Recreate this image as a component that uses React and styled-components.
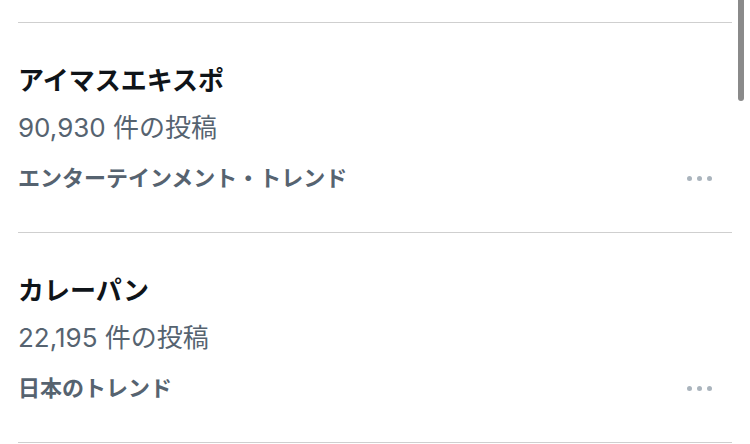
import React from 'react'
import styled, { createGlobalStyle } from 'styled-components'

const GlobalStyle = createGlobalStyle`
    html, body {
        margin: 0;
        padding: 0;
        background: #fff;
    }

    body {
        font-family: "Noto Sans CJK JP", "Noto Sans", sans-serif;
        -webkit-font-smoothing: antialiased;
    }
`

const Page = styled.div`
    position: relative;
    width: 750px;
    height: 444px;
    overflow: hidden;
    background: #fff;

    padding: 22px 18px 0 18px;
    box-sizing: border-box;
`

const Scrollbar = styled.div`
    position: absolute;
    top: 0;
    left: 738px;

    width: 6px;
    height: 101px;

    background-color: #8a8a8a;
    border-radius: 0 0 3px 3px;
`

const List = styled.div`
    display: flex;
    flex-direction: column;
    border-top: 1px solid #cfcfcf;
`

const Item = styled.div`
    display: flex;
    justify-content: space-between;

    padding: 40px 0 41px 0;
    border-bottom: 1px solid #cfcfcf;
`

const TextWrapper = styled.div`
    display: flex;
    flex-direction: column;
`

const Title = styled.div`
    font-size: 26px;
    font-weight: 700;
    line-height: 32px;
    color: #0f1419;
`

const Count = styled.div`
    margin-top: 17px;

    font-family: Inter, "Noto Sans CJK JP", sans-serif;
    font-size: 26px;
    font-weight: 400;
    line-height: 32px;
    color: #566370;
`

const Category = styled.div`
    margin-top: 17px;

    font-size: 22px;
    font-weight: 700;
    line-height: 30px;
    color: #566370;
`

const More = styled.div`
    display: flex;
    align-self: flex-end;
    gap: 5px;

    margin-right: 20px;
    margin-bottom: 10px;
`

const Dot = styled.span`
    width: 5px;
    height: 5px;
    border-radius: 50%;
    background-color: #aab4bd;
`

const trends = [
    { title: 'アイマスエキスポ', count: '90,930', category: 'エンターテインメント・トレンド' },
    { title: 'カレーパン', count: '22,195', category: '日本のトレンド' },
]

export default function App() {
    return (
        <>
            <GlobalStyle />
            <Page>
                <List>
                    {trends.map((t) => (
                        <Item key={t.title}>
                            <TextWrapper>
                                <Title>{t.title}</Title>
                                <Count>{t.count} 件の投稿</Count>
                                <Category>{t.category}</Category>
                            </TextWrapper>
                            <More>
                                <Dot />
                                <Dot />
                                <Dot />
                            </More>
                        </Item>
                    ))}
                </List>
                <Scrollbar />
            </Page>
        </>
    )
}
